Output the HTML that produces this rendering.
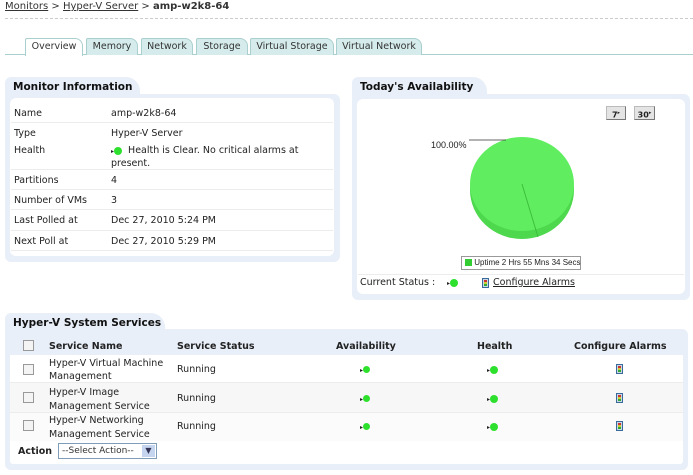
<!DOCTYPE html>
<html><head><style>
*{margin:0;padding:0;box-sizing:border-box}
body{width:693px;height:475px;background:#fff;font-family:"DejaVu Sans","Liberation Sans",sans-serif;font-size:9.5px;color:#222;position:relative;overflow:hidden}
.a{position:absolute;white-space:nowrap}
.b{font-weight:bold}
.tab{position:absolute;top:38px;height:17px;background:#d6ecec;border:1px solid #a9cfcf;border-bottom:none;border-radius:2px 8px 0 0;text-align:center;line-height:16px;color:#333}
.panel{position:absolute;background:#e8eff9;border-radius:6px}
.hdr{position:absolute;background:#e8eff9;border-radius:6px 14px 0 0;font-weight:bold;font-size:10.5px;padding:4px 8px;color:#111;white-space:nowrap}
.inner{position:absolute;background:#fff;border-radius:6px}
.sep{position:absolute;height:1px;background:#ececec}
.dot{display:inline-block;width:8px;height:8px;border-radius:50%;background:#2ee02e;vertical-align:middle}
.cb{position:absolute;width:11px;height:11px;border:1px solid #999;background:#f4f4f4}
.al{position:absolute;width:7px;height:10px;border:1px solid #3a6a9a;background:#c8d8e8}
.al:after{content:"";position:absolute;left:1px;top:1px;width:3px;height:6px;background:linear-gradient(#c33 0 33%,#cc3 33% 66%,#3a3 66%)}
</style></head><body>
<div class="a" style="left:5px;top:1px;font-size:10px;color:#333"><u>Monitors</u> &gt; <u>Hyper-V Server</u> &gt; <b>amp-w2k8-64</b></div>
<div class="a" style="left:5px;top:18px;width:688px;border-top:1px dashed #ccc"></div>

<div class="a" style="left:5px;top:54px;width:688px;height:1px;background:#a9cfcf"></div>
<div class="tab" style="left:25px;width:58px;background:#fff;height:18px">Overview</div>
<div class="tab" style="left:86px;width:52px">Memory</div>
<div class="tab" style="left:141px;width:52px">Network</div>
<div class="tab" style="left:196px;width:52px">Storage</div>
<div class="tab" style="left:250px;width:84px">Virtual Storage</div>
<div class="tab" style="left:336px;width:86px">Virtual Network</div>

<div class="hdr" style="left:5px;top:77px;width:135px;height:22px">Monitor Information</div>
<div class="panel" style="left:5px;top:94px;width:335px;height:168px"></div>
<div class="inner" style="left:10px;top:98px;width:324px;height:158px"></div>
<div class="a" style="left:14px;top:108px">Name</div><div class="a" style="left:111px;top:108px">amp-w2k8-64</div>
<div class="sep" style="left:11px;top:122px;width:322px"></div>
<div class="a" style="left:14px;top:128px">Type</div><div class="a" style="left:111px;top:128px">Hyper-V Server</div>
<div class="a" style="left:14px;top:145px">Health</div>
<div class="a" style="left:111px;top:145px"><span style="font-size:6px">▸</span><span class="dot"></span>&nbsp;&nbsp;Health is Clear. No critical alarms at</div>
<div class="a" style="left:111px;top:158px">present.</div>
<div class="sep" style="left:11px;top:169px;width:322px"></div>
<div class="a" style="left:14px;top:175px">Partitions</div><div class="a" style="left:111px;top:175px">4</div>
<div class="sep" style="left:11px;top:189px;width:322px"></div>
<div class="a" style="left:14px;top:195px">Number of VMs</div><div class="a" style="left:111px;top:195px">3</div>
<div class="sep" style="left:11px;top:209px;width:322px"></div>
<div class="a" style="left:14px;top:215px">Last Polled at</div><div class="a" style="left:111px;top:215px">Dec 27, 2010 5:24 PM</div>
<div class="sep" style="left:11px;top:230px;width:322px"></div>
<div class="a" style="left:14px;top:236px">Next Poll at</div><div class="a" style="left:111px;top:236px">Dec 27, 2010 5:29 PM</div>
<div class="sep" style="left:11px;top:250px;width:322px"></div>

<div class="hdr" style="left:352px;top:77px;width:135px;height:22px">Today's Availability</div>
<div class="panel" style="left:352px;top:94px;width:338px;height:206px"></div>
<div class="inner" style="left:357px;top:99px;width:328px;height:195px"></div>
<div class="a" style="left:606px;top:106px;width:20px;height:14px;background:#e4e4e4;border:1px solid #bbb;border-right-color:#777;border-bottom-color:#777;font-size:8px;font-weight:bold;text-align:center;line-height:12px">7<sup style="font-size:5px">▸</sup></div>
<div class="a" style="left:634px;top:106px;width:21px;height:14px;background:#e4e4e4;border:1px solid #bbb;border-right-color:#777;border-bottom-color:#777;font-size:8px;font-weight:bold;text-align:center;line-height:12px">30<sup style="font-size:5px">▸</sup></div>
<svg class="a" style="left:420px;top:130px" width="170" height="115">
<ellipse cx="102" cy="60" rx="52" ry="49" fill="#4ed84e"/>
<ellipse cx="102" cy="54" rx="52" ry="47" fill="#60ee60"/>
<line x1="102" y1="54" x2="118" y2="107" stroke="#3cbf3c" stroke-width="1"/>
<line x1="49" y1="10" x2="86" y2="10" stroke="#333" stroke-width="0.8"/>
</svg>
<div class="a" style="left:431px;top:140px;font-family:'Liberation Sans';font-size:9px">100.00%</div>
<div class="a" style="left:461px;top:256px;width:120px;height:14px;border:1px solid #999;font-family:'Liberation Sans';font-size:8px;line-height:12px;padding-left:3px"><span style="display:inline-block;width:7px;height:7px;background:#3c3;vertical-align:-1px"></span> Uptime 2 Hrs 55 Mns 34 Secs</div>
<div class="sep" style="left:358px;top:274px;width:326px"></div>
<div class="a" style="left:360px;top:277px">Current Status :</div>
<div class="a" style="left:447px;top:277px"><span style="font-size:6px">▸</span><span class="dot"></span></div>
<div class="al" style="left:482px;top:278px"></div>
<div class="a" style="left:493px;top:277px"><u>Configure Alarms</u></div>

<div class="hdr" style="left:5px;top:313px;width:160px;height:22px">Hyper-V System Services</div>
<div class="panel" style="left:5px;top:329px;width:683px;height:141px"></div>
<div class="inner" style="left:10px;top:336px;width:673px;height:128px;border-radius:3px"></div>
<div class="a" style="left:10px;top:336px;width:673px;height:19px;background:#e8eff9"></div>
<div class="cb" style="left:23px;top:340px"></div>
<div class="a b" style="left:49px;top:341px">Service Name</div>
<div class="a b" style="left:177px;top:341px">Service Status</div>
<div class="a b" style="left:336px;top:341px">Availability</div>
<div class="a b" style="left:477px;top:341px">Health</div>
<div class="a b" style="left:574px;top:341px">Configure Alarms</div>

<div class="a" style="left:10px;top:383px;width:673px;height:29px;background:#f7f7f7"></div>
<div class="sep" style="left:10px;top:382px;width:673px"></div>
<div class="sep" style="left:10px;top:412px;width:673px"></div>
<div class="a" style="left:10px;top:413px;width:673px;height:28px;background:#fbfbfb"></div>

<div class="cb" style="left:23px;top:364px"></div>
<div class="a" style="left:49px;top:357px;line-height:13px">Hyper-V Virtual Machine<br>Management</div>
<div class="a" style="left:177px;top:364px">Running</div>
<div class="cb" style="left:23px;top:392px"></div>
<div class="a" style="left:49px;top:386px;line-height:14px">Hyper-V Image<br>Management Service</div>
<div class="a" style="left:177px;top:393px">Running</div>
<div class="cb" style="left:23px;top:420px"></div>
<div class="a" style="left:49px;top:414px;line-height:14px">Hyper-V Networking<br>Management Service</div>
<div class="a" style="left:177px;top:421px">Running</div>

<div class="a" style="left:360px;top:364px"><span style="font-size:6px">▸</span><span class="dot" style="width:7px;height:7px"></span></div>
<div class="a" style="left:360px;top:393px"><span style="font-size:6px">▸</span><span class="dot" style="width:7px;height:7px"></span></div>
<div class="a" style="left:360px;top:421px"><span style="font-size:6px">▸</span><span class="dot" style="width:7px;height:7px"></span></div>
<div class="a" style="left:487px;top:364px"><span style="font-size:6px">▸</span><span class="dot"></span></div>
<div class="a" style="left:487px;top:393px"><span style="font-size:6px">▸</span><span class="dot"></span></div>
<div class="a" style="left:487px;top:421px"><span style="font-size:6px">▸</span><span class="dot"></span></div>
<div class="al" style="left:616px;top:364px"></div>
<div class="al" style="left:616px;top:393px"></div>
<div class="al" style="left:616px;top:421px"></div>

<div class="a b" style="left:18px;top:446px">Action</div>
<div class="a" style="left:58px;top:443px;width:99px;height:16px;border:1px solid #7f9db9;background:#fff;font-size:9px;line-height:14px;padding-left:3px;color:#333">--Select Action--</div>
<div class="a" style="left:142px;top:445px;width:13px;height:12px;background:#c5d5f0;color:#335;font-size:8px;text-align:center;line-height:12px">&#9660;</div>
</body></html>
